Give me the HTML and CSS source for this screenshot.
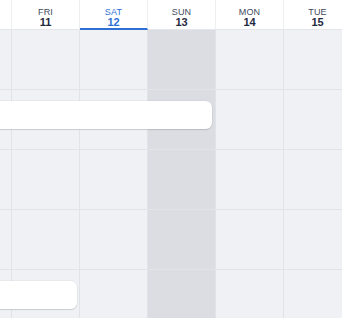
FILE: index.html
```html
<!DOCTYPE html>
<html>
<head>
<meta charset="utf-8">
<link rel="stylesheet" href="styles.css">
</head>
<body>
<div class="cal">
  <div class="head">
    <div class="hcell"></div>
    <div class="hcell"><span class="dn">FRI</span><span class="dd">11</span></div>
    <div class="hcell today"><span class="dn">SAT</span><span class="dd">12</span></div>
    <div class="hcell"><span class="dn">SUN</span><span class="dd">13</span></div>
    <div class="hcell"><span class="dn">MON</span><span class="dd">14</span></div>
    <div class="hcell"><span class="dn">TUE</span><span class="dd">15</span></div>
  </div>
  <div class="grid">
    <div class="c"></div><div class="c"></div><div class="c"></div><div class="c sun"></div><div class="c"></div><div class="c"></div>
    <div class="c"></div><div class="c"></div><div class="c"></div><div class="c sun"></div><div class="c"></div><div class="c"></div>
    <div class="c"></div><div class="c"></div><div class="c"></div><div class="c sun"></div><div class="c"></div><div class="c"></div>
    <div class="c"></div><div class="c"></div><div class="c"></div><div class="c sun"></div><div class="c"></div><div class="c"></div>
    <div class="c"></div><div class="c"></div><div class="c"></div><div class="c sun"></div><div class="c"></div><div class="c"></div>
    <div class="event ev1"></div>
    <div class="event ev2"></div>
  </div>
</div>
</body>
</html>
```
FILE: styles.css
```css
html, body {
  margin: 0;
  padding: 0;
  background: #f0f1f4;
  overflow: hidden;
  font-family: "Liberation Sans", Arial, sans-serif;
}
.cal {
  width: 342px;
  height: 318px;
  overflow: hidden;
}
.head {
  display: grid;
  grid-template-columns: repeat(6, 68px);
  margin-left: -56px;
  height: 30px;
  background: #ffffff;
}
.hcell {
  display: flex;
  flex-direction: column;
  align-items: center;
  padding-top: 8px;
  box-sizing: border-box;
  border-right: 1px solid #eceef2;
  border-bottom: 1px solid #e3e5ea;
  color: #3e4a60;
}
.dn {
  font-size: 9px;
  line-height: 9px;
  letter-spacing: 0.2px;
}
.dd {
  font-size: 11px;
  line-height: 11px;
  font-weight: bold;
  color: #1f2940;
}
.hcell.today {
  border-bottom: 2px solid #2f6fd4;
}
.hcell.today .dn,
.hcell.today .dd {
  color: #2f6fd4;
}
.grid {
  position: relative;
  display: grid;
  grid-template-columns: repeat(6, 68px);
  grid-auto-rows: 60px;
  margin-left: -56px;
}
.c {
  box-sizing: border-box;
  border-right: 1px solid #e2e3e8;
  border-bottom: 1px solid #e2e3e8;
}
.c.sun {
  background: #dcdde3;
}
.event {
  position: absolute;
  height: 28px;
  background: #ffffff;
  border-radius: 6px;
  box-shadow: 0 1px 1px rgba(60, 70, 90, 0.18), 0 0 0 0.5px rgba(60, 70, 90, 0.08);
}
.ev1 {
  top: 71px;
  left: 20px;
  width: 248px;
}
.ev2 {
  top: 251px;
  left: 20px;
  width: 113px;
}
```
